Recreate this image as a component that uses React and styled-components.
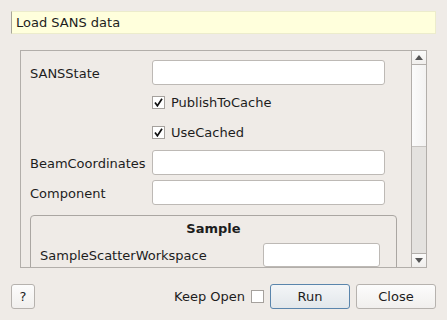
import React from "react";
import styled, { createGlobalStyle } from "styled-components";

const Global = createGlobalStyle`
  html, body {
    margin: 0;
    padding: 0;
    background: #efebe7;
    font-family: "DejaVu Sans", "Liberation Sans", sans-serif;
    font-size: 13px;
    color: #1d1d1d;
  }
`;

const Dialog = styled.div`
  width: 447px;
  height: 320px;
  box-sizing: border-box;
  padding: 11px;
  display: flex;
  flex-direction: column;
`;

const TitleBox = styled.div`
  height: 24px;
  box-sizing: border-box;
  background: #ffffdc;
  border: 1px solid #ececcc;
  border-left-color: #a8a69a;
  padding-left: 4px;
  display: flex;
  align-items: center;
`;

const ScrollArea = styled.div`
  margin: 16px 9px 0;
  height: 218px;
  box-sizing: border-box;
  border: 1px solid #b2aeaa;
  display: flex;
`;

const Viewport = styled.div`
  flex: 1;
  overflow: hidden;
  padding: 9px 0 0 9px;
`;

const FormGrid = styled.div`
  display: grid;
  grid-template-columns: 122px 233px;
  grid-auto-rows: 25px;
  row-gap: 5px;
  align-items: center;
`;

const Label = styled.div`
  white-space: nowrap;
  padding-top: 1px;
`;

const Input = styled.div`
  height: ${(p) => p.h || 25}px;
  box-sizing: border-box;
  background: #fff;
  border: 1px solid #bdb9b5;
  border-radius: 3px;
`;

const CheckRow = styled.label`
  grid-column: 2;
  display: flex;
  align-items: center;
  gap: 6px;
`;

const Box = styled.span`
  width: 13px;
  height: 13px;
  box-sizing: border-box;
  background: #fff;
  border: 1px solid #a5a19d;
  display: inline-flex;
  align-items: center;
  justify-content: center;
`;

const Group = styled.fieldset`
  margin: 10px 0 0 0;
  width: 367px;
  box-sizing: border-box;
  border: 1px solid #aaa6a2;
  border-radius: 4px;
  padding: 0 0 30px 9px;
`;

const GroupTitle = styled.div`
  font-weight: bold;
  text-align: center;
  padding: 5px 0 7px;
  margin-left: -9px;
`;

const GroupRow = styled.div`
  display: grid;
  grid-template-columns: 223px 117px;
  align-items: center;
  height: 24px;
`;

const ScrollBar = styled.div`
  width: 14px;
  border-left: 1px solid #b2aeaa;
  display: flex;
  flex-direction: column;
`;

const Arrow = styled.div`
  height: 13px;
  background: linear-gradient(#fbfbfa, #f0eeec);
  border-${(p) => (p.up ? "bottom" : "top")}: 1px solid #b2aeaa;
  display: flex;
  align-items: center;
  justify-content: center;
`;

const Thumb = styled.div`
  height: 81px;
  background: linear-gradient(90deg, #fbfbfb, #f3f2f1);
  border-bottom: 1px solid #c6c3c0;
`;

const Track = styled.div`
  flex: 1;
  background: #e4e2df;
`;

const Footer = styled.div`
  margin-top: 16px;
  display: flex;
  align-items: center;
  height: 25px;
`;

const Button = styled.button`
  height: 25px;
  width: ${(p) => p.w || 80}px;
  box-sizing: border-box;
  font-family: inherit;
  font-size: 13px;
  color: #1d1d1d;
  border-radius: 3px;
  border: 1px solid ${(p) => (p.primary ? "#5a85ac" : "#b6b2ae")};
  background: ${(p) =>
    p.primary
      ? "linear-gradient(#f3f5f7, #e2e7eb)"
      : "linear-gradient(#fcfcfc, #f1efed)"};
  padding: 0;
  margin-left: ${(p) => p.ml || 0}px;
`;

const Spacer = styled.div`
  flex: 1;
`;

const KeepOpen = styled.label`
  display: flex;
  align-items: center;
  gap: 6px;
  margin-right: 6px;
`;

const Check = () => (
  <svg width="9" height="9" viewBox="0 0 9 9">
    <path d="M1 4.5 L3.4 7.8 L8 0.8" fill="none" stroke="#111" strokeWidth="1.7" />
  </svg>
);

const Tri = ({ up }) => (
  <svg width="8" height="5" viewBox="0 0 8 5">
    <polygon points={up ? "0,5 8,5 4,0" : "0,0 8,0 4,5"} fill="#555" />
  </svg>
);

export default function App() {
  return (
    <>
      <Global />
      <Dialog>
        <TitleBox>Load SANS data</TitleBox>
        <ScrollArea>
          <Viewport>
            <FormGrid>
              <Label>SANSState</Label>
              <Input />
              <CheckRow>
                <Box><Check /></Box>PublishToCache
              </CheckRow>
              <CheckRow>
                <Box><Check /></Box>UseCached
              </CheckRow>
              <Label>BeamCoordinates</Label>
              <Input />
              <Label>Component</Label>
              <Input />
            </FormGrid>
            <Group>
              <GroupTitle>Sample</GroupTitle>
              <GroupRow>
                <Label>SampleScatterWorkspace</Label>
                <Input h={24} />
              </GroupRow>
            </Group>
          </Viewport>
          <ScrollBar>
            <Arrow up><Tri up /></Arrow>
            <Thumb />
            <Track />
            <Arrow><Tri /></Arrow>
          </ScrollBar>
        </ScrollArea>
        <Footer>
          <Button w={24}>?</Button>
          <Spacer />
          <KeepOpen>
            Keep Open <Box />
          </KeepOpen>
          <Button primary>Run</Button>
          <Button ml={6}>Close</Button>
        </Footer>
      </Dialog>
    </>
  );
}
